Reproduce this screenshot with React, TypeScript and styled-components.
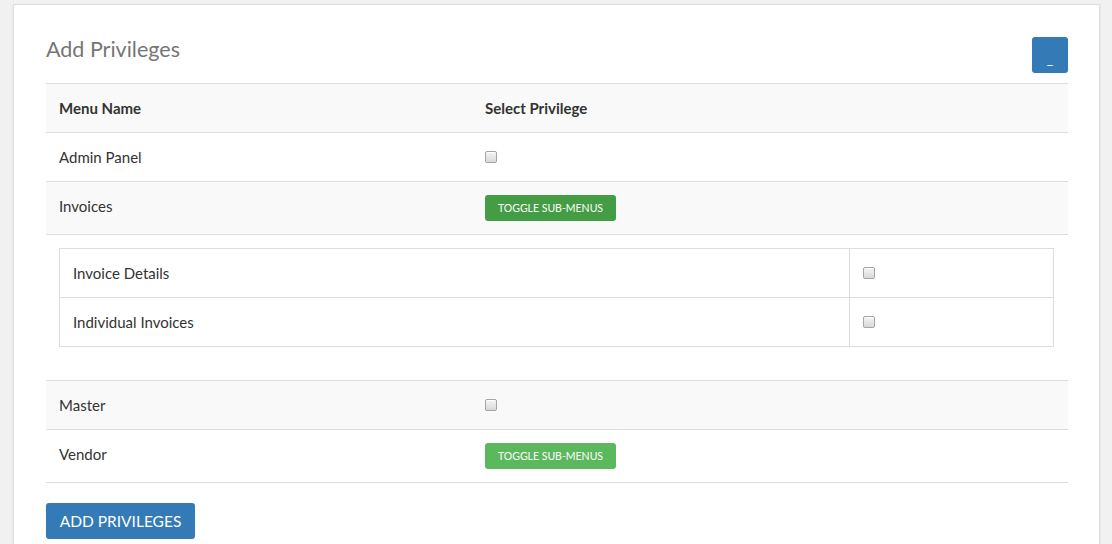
import React from "react";
import styled, { createGlobalStyle } from "styled-components";

const Global = createGlobalStyle`
  html, body { margin: 0; padding: 0; background: #f1f1f1; }
  body { font-family: Lato, "Noto Sans", Arial, sans-serif; color: #333; }
  * { box-sizing: border-box; }
`;

const Page = styled.div`
  padding: 4px 12px 0 13px;
  min-height: 544px;
`;

const Card = styled.div`
  background: #fff;
  border: 1px solid #dedede;
  box-shadow: 0 1px 2px rgba(0, 0, 0, 0.12);
  padding: 30px 31px 20px 32px;
  min-height: 560px;
`;

const Header = styled.div`
  display: flex;
  justify-content: space-between;
  align-items: flex-start;
  margin-bottom: 10px;
`;

const Title = styled.h2`
  margin: 0;
  font-size: 21.5px;
  line-height: 28px;
  font-weight: 400;
  color: #767676;
`;

const IconButton = styled.button`
  width: 36px;
  height: 36px;
  margin-top: 2px;
  border: none;
  border-radius: 3px;
  background: #337ab7;
  color: #fff;
  font-family: inherit;
  font-size: 14px;
  line-height: 1;
  padding: 8px 0 0;
  cursor: pointer;
`;

const Table = styled.div`
  border-bottom: 1px solid #ddd;
`;

const Row = styled.div<{ $striped?: boolean }>`
  display: grid;
  grid-template-columns: 426px 1fr;
  align-items: start;
  border-top: 1px solid #ddd;
  background: ${(p) => (p.$striped ? "#f9f9f9" : "#fff")};
  padding: 13px 13px;
  font-size: 15px;
`;

const HeadCell = styled.div`
  font-weight: 700;
  color: #333;
  line-height: 22px;
`;

const Cell = styled.div`
  color: #333;
  display: flex;
  align-items: center;
  min-height: 22px;
  line-height: 22px;
`;

const Check = styled.input.attrs({ type: "checkbox" })`
  appearance: none;
  margin: 0;
  width: 12px;
  height: 12px;
  border: 1px solid #a4a4a4;
  border-radius: 2px;
  background: linear-gradient(#f4f4f4, #d9d9d9);
  box-shadow: inset 0 1px 0 #fff;
`;

const ToggleButton = styled.button<{ $active?: boolean }>`
  height: 26px;
  width: 131px;
  border: none;
  border-radius: 3px;
  background: ${(p) => (p.$active ? "#449d44" : "#5cb85c")};
  color: #fff;
  font-family: inherit;
  font-size: 10.5px;
  font-weight: 400;
  text-transform: uppercase;
  padding: 0;
  cursor: pointer;
`;

const NestedRow = styled.div`
  border-top: 1px solid #ddd;
  background: #fff;
  padding: 13px 14px 33px 13px;
`;

const SubTable = styled.div`
  border: 1px solid #ddd;
`;

const SubRow = styled.div`
  display: grid;
  grid-template-columns: 789px 1fr;
  box-sizing: content-box;
  height: 48px;
  font-size: 15px;
  & + & {
    border-top: 1px solid #ddd;
  }
`;

const SubCell = styled.div`
  display: flex;
  align-items: center;
  padding: 0 13px;
  & + & {
    border-left: 1px solid #ddd;
  }
`;

const Footer = styled.div`
  padding-top: 20px;
`;

const PrimaryButton = styled.button`
  height: 36px;
  width: 149px;
  border: none;
  border-radius: 3px;
  background: #337ab7;
  color: #fff;
  font-family: inherit;
  font-size: 15.5px;
  text-transform: uppercase;
  padding: 0;
  cursor: pointer;
`;

const subMenus = ["Invoice Details", "Individual Invoices"];

export default function App() {
  return (
    <>
      <Global />
      <Page>
        <Card>
          <Header>
            <Title>Add Privileges</Title>
            <IconButton>_</IconButton>
          </Header>
          <Table>
            <Row $striped>
              <HeadCell>Menu Name</HeadCell>
              <HeadCell>Select Privilege</HeadCell>
            </Row>
            <Row>
              <Cell>Admin Panel</Cell>
              <Cell>
                <Check />
              </Cell>
            </Row>
            <Row $striped>
              <Cell>Invoices</Cell>
              <Cell>
                <ToggleButton $active>Toggle Sub-Menus</ToggleButton>
              </Cell>
            </Row>
            <NestedRow>
              <SubTable>
                {subMenus.map((m) => (
                  <SubRow key={m}>
                    <SubCell>{m}</SubCell>
                    <SubCell>
                      <Check />
                    </SubCell>
                  </SubRow>
                ))}
              </SubTable>
            </NestedRow>
            <Row $striped>
              <Cell>Master</Cell>
              <Cell>
                <Check />
              </Cell>
            </Row>
            <Row>
              <Cell>Vendor</Cell>
              <Cell>
                <ToggleButton>Toggle Sub-Menus</ToggleButton>
              </Cell>
            </Row>
          </Table>
          <Footer>
            <PrimaryButton>Add Privileges</PrimaryButton>
          </Footer>
        </Card>
      </Page>
    </>
  );
}
